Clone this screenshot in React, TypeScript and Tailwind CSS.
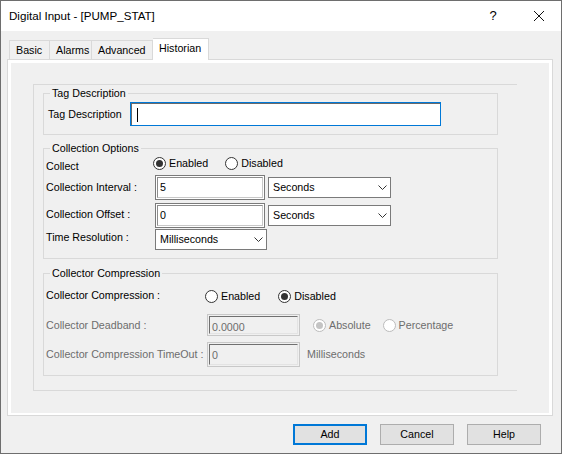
import clsx from 'clsx';

function Radio({ checked, disabled, label }: { checked?: boolean; disabled?: boolean; label: string }) {
  return (
    <span className="flex items-center gap-[3px]">
      <span
        className={clsx(
          'w-[13px] h-[13px] rounded-full border flex items-center justify-center bg-white',
          disabled ? 'border-[#bcbcbc]' : 'border-[#333333]'
        )}
      >
        {checked && (
          <span className={clsx('w-[7px] h-[7px] rounded-full', disabled ? 'bg-[#c4c4c4]' : 'bg-[#333333]')} />
        )}
      </span>
      <span className={clsx('leading-[13px]', disabled ? 'text-[#6d6d6d]' : 'text-black')}>{label}</span>
    </span>
  );
}

function Chevron() {
  return (
    <svg width="9" height="5" viewBox="0 0 9 5" className="text-[#333333]">
      <path d="M0.5 0.5 L4.5 4.5 L8.5 0.5" fill="none" stroke="currentColor" strokeWidth="1" />
    </svg>
  );
}

function Select({ value, className }: { value: string; className: string }) {
  return (
    <div className={clsx('border border-[#7a7a7a] bg-white flex items-center justify-between pl-[4px] pr-[3px]', className)}>
      <span>{value}</span>
      <Chevron />
    </div>
  );
}

function TextBox({ value, className }: { value: string; className: string }) {
  return (
    <div className={clsx('border border-[#7a7a7a] bg-white p-px', className)}>
      <div className="h-full border-t border-l border-[#8c8c8c] border-r border-b border-r-[#c8c8c8] border-b-[#c8c8c8] pl-[2px] flex items-center">
        {value}
      </div>
    </div>
  );
}

function DisabledBox({ value, className }: { value: string; className: string }) {
  return (
    <div className={clsx('border border-[#c8c8c8] p-px', className)}>
      <div className="h-full border-t border-l border-[#707070] border-r border-b border-r-[#e3e3e3] border-b-[#e3e3e3] pl-[2px] pt-[2px] text-[#6d6d6d]">
        {value}
      </div>
    </div>
  );
}

function Legend({ children }: { children: string }) {
  return <legend className="ml-[4px] px-[2px] leading-[14px]">{children}</legend>;
}

export default function App() {
  return (
    <div className="w-[562px] h-[454px] border border-[#6e6e6e] bg-[#f0f0f0] text-[10.7px] text-black font-['Liberation_Sans',Arial,sans-serif] overflow-hidden whitespace-nowrap">
      {/* title bar */}
      <div className="h-[30px] bg-white flex items-center">
        <span className="pl-[8px] text-[11.6px] flex-1">Digital Input - [PUMP_STAT]</span>
        <span className="w-[14px] text-center text-[13px] mr-[34px]">?</span>
        <svg width="10" height="10" viewBox="0 0 10 10" className="mr-[17px]">
          <path d="M0 0 L10 10 M10 0 L0 10" stroke="#111" strokeWidth="1" />
        </svg>
      </div>

      {/* tabs */}
      <div className="mt-[7px] h-[21px] pl-[8px] flex items-end">
        <div className="w-[41px] h-[19px] border border-b-0 border-[#d9d9d9] flex items-center pl-[6px]">Basic</div>
        <div className="w-[42px] h-[19px] border border-b-0 border-l-0 border-[#d9d9d9] flex items-center pl-[6px]">Alarms</div>
        <div className="w-[61px] h-[19px] border border-b-0 border-l-0 border-[#d9d9d9] flex items-center pl-[6px]">Advanced</div>
        <div className="relative z-10 w-[56px] h-[22px] -mb-px border border-b-0 border-l-0 border-[#d9d9d9] bg-white flex items-center pl-[6px] pb-[3px]">
          Historian
        </div>
      </div>

      {/* tab page */}
      <div className="ml-[6px] w-[546px] h-[357px] border border-[#d9d9d9]">
        <div className="h-full border-[3px] border-b-2 border-white pl-[22px] pt-[21px]">
          <div className="w-[484px] h-[307px] border-l border-t border-b border-[#d9d9d9] pl-[9px]">
            {/* Tag Description */}
            <fieldset className="mt-px w-[455px] border border-[#d9d9d9] pl-[2px] pb-[8px]">
              <Legend>Tag Description</Legend>
              <div className="mt-[2px] flex items-center pl-[2px]">
                <span className="w-[82px]">Tag Description</span>
                <div className="w-[311px] h-[24px] border border-[#0078d7] bg-white">
                  <div className="h-full border-t border-l border-[#6a6a6a] flex items-center pl-[5px]">
                    <span className="w-px h-[14px] bg-black" />
                  </div>
                </div>
              </div>
            </fieldset>

            {/* Collection Options */}
            <fieldset className="mt-[6px] w-[455px] border border-[#d9d9d9] pl-[2px] pb-[8px]">
              <Legend>Collection Options</Legend>
              <div className="mt-[2px] h-[13px] flex items-start">
                <span className="w-[107px] mt-[3px] leading-[13px]">Collect</span>
                <div className="h-[13px] flex items-center">
                  <Radio checked label="Enabled" />
                  <span className="ml-[17px]">
                    <Radio label="Disabled" />
                  </span>
                </div>
              </div>
              <div className="mt-[5px] h-[25px] flex items-center">
                <span className="w-[109px]">Collection Interval :</span>
                <TextBox value="5" className="w-[110px] h-[25px]" />
                <Select value="Seconds" className="ml-[3px] w-[123px] h-[21px]" />
              </div>
              <div className="mt-[3px] h-[25px] flex items-center">
                <span className="w-[109px] -mt-[3px]">Collection Offset :</span>
                <TextBox value="0" className="w-[110px] h-[25px]" />
                <Select value="Seconds" className="ml-[3px] w-[123px] h-[21px]" />
              </div>
              <div className="mt-[1px] h-[21px] flex items-center">
                <span className="w-[109px] -mt-[5px]">Time Resolution :</span>
                <Select value="Milliseconds" className="w-[112px] h-[21px]" />
              </div>
            </fieldset>

            {/* Collector Compression */}
            <fieldset className="mt-[7px] w-[455px] border border-[#d9d9d9] pl-[2px] pb-[8px]">
              <Legend>Collector Compression</Legend>
              <div className="mt-[10px] flex items-center h-[13px]">
                <span className="w-[159px] -mt-[2px]">Collector Compression :</span>
                <Radio label="Enabled" />
                <span className="ml-[18px]">
                  <Radio checked label="Disabled" />
                </span>
              </div>
              <div className="mt-[11px] h-[22px] flex items-center">
                <span className="w-[161px] text-[#6d6d6d]">Collector Deadband :</span>
                <DisabledBox value="0.0000" className="w-[93px] h-[22px]" />
                <span className="ml-[13px]">
                  <Radio checked disabled label="Absolute" />
                </span>
                <span className="ml-[12px]">
                  <Radio disabled label="Percentage" />
                </span>
              </div>
              <div className="mt-[6px] h-[25px] flex items-center">
                <span className="w-[161px] text-[#6d6d6d]">Collector Compression TimeOut :</span>
                <DisabledBox value="0" className="w-[93px] h-[25px]" />
                <span className="ml-[7px] text-[#6d6d6d]">Milliseconds</span>
              </div>
            </fieldset>
          </div>
        </div>
      </div>

      {/* buttons */}
      <div className="mt-[8px] flex justify-end gap-[13px] pr-[20px]">
        <button className="w-[74px] h-[21px] border-2 border-[#0078d7] bg-[#e1e1e1] flex items-center justify-center">Add</button>
        <button className="w-[74px] h-[21px] border border-[#adadad] bg-[#e1e1e1] flex items-center justify-center">Cancel</button>
        <button className="w-[74px] h-[21px] border border-[#adadad] bg-[#e1e1e1] flex items-center justify-center">Help</button>
      </div>
    </div>
  );
}
